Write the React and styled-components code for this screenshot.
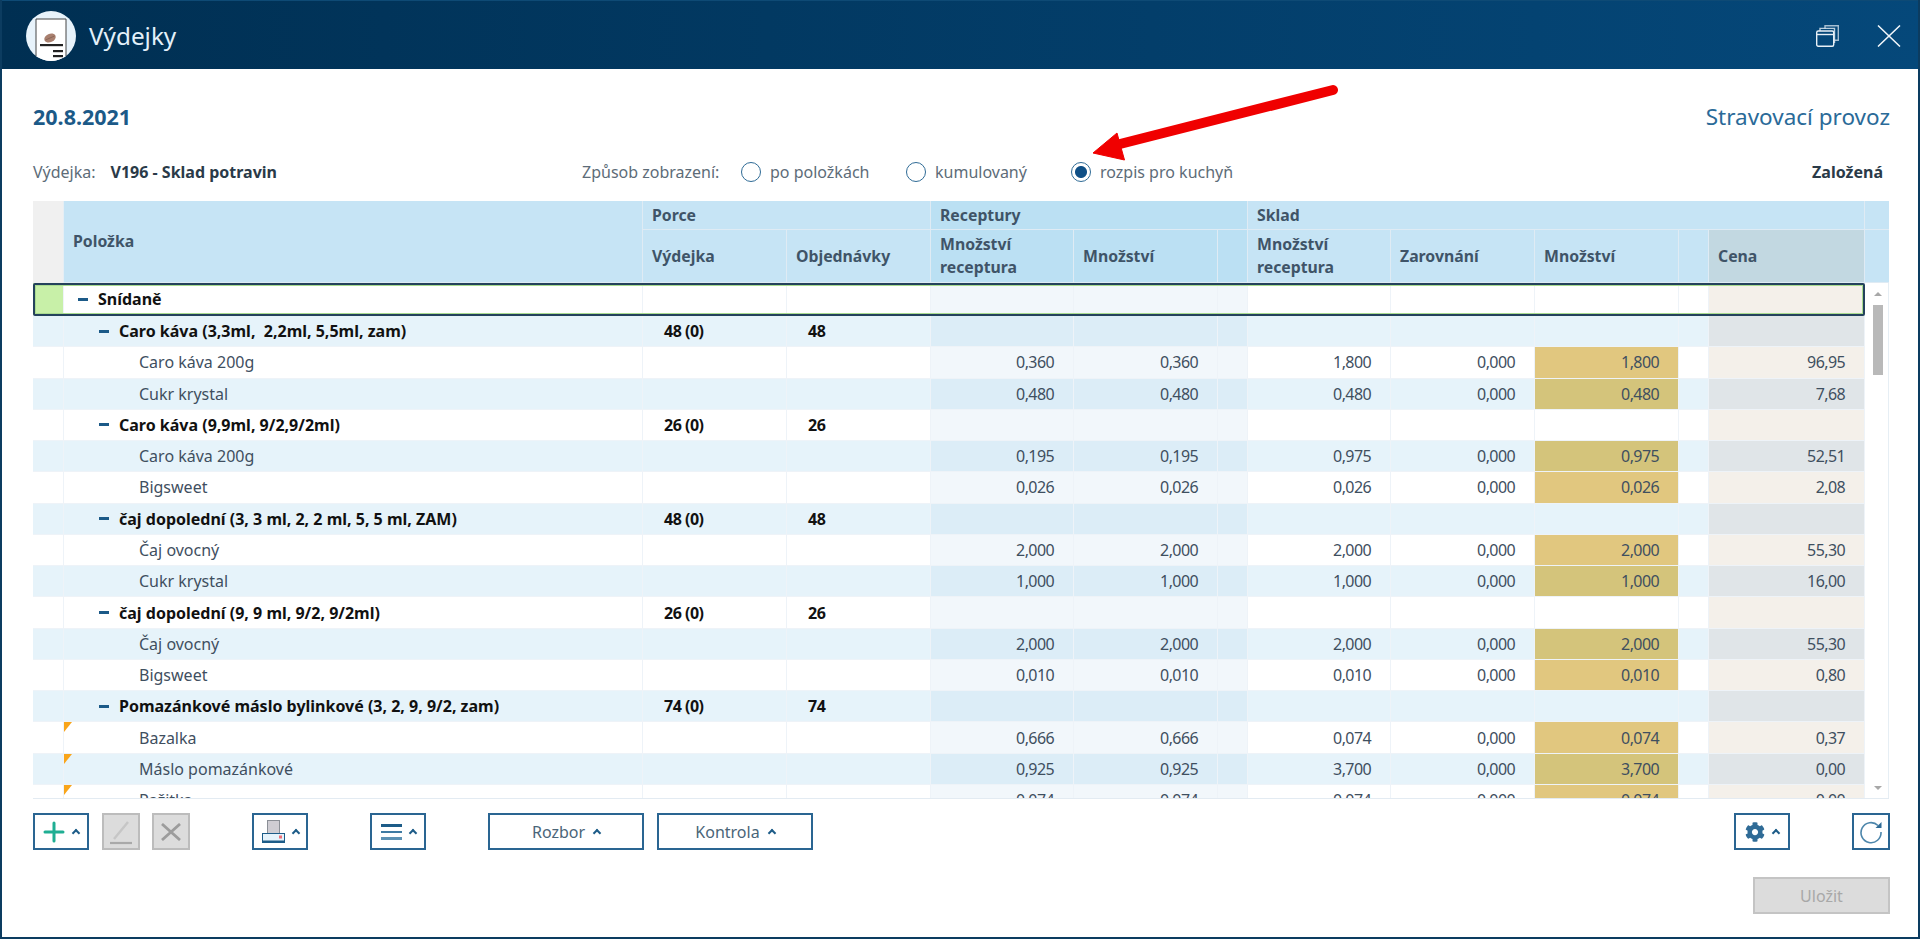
import React from "react";
import styled, { createGlobalStyle } from "styled-components";
import { FaCog } from "react-icons/fa";

const COLS = "31px 579px 144px 144px 143px 144px 30px 143px 144px 144px 30px 156px";
const FONT = `"Noto Sans", "Open Sans", sans-serif`;

const rows = [
  { kind: "meal", name: "Snídaně" },
  { kind: "group", name: "Caro káva (3,3ml,  2,2ml, 5,5ml, zam)", issued: "48 (0)", ordered: "48" },
  { kind: "item", name: "Caro káva 200g", v: ["0,360", "0,360", "1,800", "0,000", "1,800", "96,95"] },
  { kind: "item", name: "Cukr krystal", v: ["0,480", "0,480", "0,480", "0,000", "0,480", "7,68"] },
  { kind: "group", name: "Caro káva (9,9ml, 9/2,9/2ml)", issued: "26 (0)", ordered: "26" },
  { kind: "item", name: "Caro káva 200g", v: ["0,195", "0,195", "0,975", "0,000", "0,975", "52,51"] },
  { kind: "item", name: "Bigsweet", v: ["0,026", "0,026", "0,026", "0,000", "0,026", "2,08"] },
  { kind: "group", name: "čaj dopolední (3, 3 ml, 2, 2 ml, 5, 5 ml, ZAM)", issued: "48 (0)", ordered: "48" },
  { kind: "item", name: "Čaj ovocný", v: ["2,000", "2,000", "2,000", "0,000", "2,000", "55,30"] },
  { kind: "item", name: "Cukr krystal", v: ["1,000", "1,000", "1,000", "0,000", "1,000", "16,00"] },
  { kind: "group", name: "čaj dopolední (9, 9 ml, 9/2, 9/2ml)", issued: "26 (0)", ordered: "26" },
  { kind: "item", name: "Čaj ovocný", v: ["2,000", "2,000", "2,000", "0,000", "2,000", "55,30"] },
  { kind: "item", name: "Bigsweet", v: ["0,010", "0,010", "0,010", "0,000", "0,010", "0,80"] },
  { kind: "group", name: "Pomazánkové máslo bylinkové (3, 2, 9, 9/2, zam)", issued: "74 (0)", ordered: "74" },
  { kind: "item", flag: true, name: "Bazalka", v: ["0,666", "0,666", "0,074", "0,000", "0,074", "0,37"] },
  { kind: "item", flag: true, name: "Máslo pomazánkové", v: ["0,925", "0,925", "3,700", "0,000", "3,700", "0,00"] },
  { kind: "item", flag: true, name: "Pažitka", v: ["0,074", "0,074", "0,074", "0,000", "0,074", "0,00"] },
];

const tones = {
  plain: ["#ffffff", "#e6f3fa"],
  recipe: ["#f2f7fb", "#dcedf7"],
  stock: ["#e1c77f", "#d4c47b"],
  price: ["#f4f0ea", "#e0e5e8"],
};

export default function App() {
  return (
    <>
      <GlobalStyle />
      <Window>
        <TitleBar>
          <Logo viewBox="0 0 50 50">
            <circle cx="25" cy="25" r="25" fill="#e8f3fb" />
            <path d="M10 45V8h30v37q-15 10-30 0z" fill="#fff" />
            <path d="M10 45V8h30v37" fill="none" stroke="#444" strokeWidth="1" />
            <ellipse cx="24" cy="27" rx="6" ry="4.2" transform="rotate(-25 24 27)" fill="#a9806f" />
            <path d="M19.5 29L28.5 25" stroke="#7d5a4c" strokeWidth="0.7" />
            <rect x="14" y="33" width="23" height="2.2" fill="#222" />
            <rect x="27" y="39" width="10" height="2.2" fill="#222" />
            <rect x="27" y="44" width="10" height="2.2" fill="#222" />
          </Logo>
          <Title>Výdejky</Title>
          <WindowIcons>
            <svg width="23" height="22" viewBox="0 0 23 22" fill="none" stroke="#e8f0f6" strokeWidth="1.4">
              <rect x="0.7" y="6" width="17" height="15.3" rx="1.5" />
              <path d="M0.7 9.5h17" />
              <path d="M4 6V3.4h14.5v14h-1" opacity="0.8" />
              <path d="M9 3.4V0.8h13.3v14.4h-3.8" opacity="0.7" />
            </svg>
            <svg width="24" height="22" viewBox="0 0 24 22" stroke="#f2f7fb" strokeWidth="1.5">
              <path d="M1 0.5l22 21M23 0.5L1 21.5" />
            </svg>
          </WindowIcons>
        </TitleBar>

        <Content>
          <TopLine>
            <DateLabel>20.8.2021</DateLabel>
            <Facility>Stravovací provoz</Facility>
          </TopLine>

          <InfoLine>
            <DocInfo>
              <span>Výdejka:</span>
              <strong>V196 - Sklad potravin</strong>
            </DocInfo>
            <Modes>
              <ModeLabel>Způsob zobrazení:</ModeLabel>
              <Radio $width={165}><RadioDot />po položkách</Radio>
              <Radio $width={165}><RadioDot />kumulovaný</Radio>
              <Radio><RadioDot $checked />rozpis pro kuchyň</Radio>
            </Modes>
            <Status>Založená</Status>
          </InfoLine>

          <Arrow width="260" height="80" viewBox="0 0 260 80">
            <path d="M244 6L31 60" stroke="#f00000" strokeWidth="10" strokeLinecap="round" fill="none" />
            <path d="M4 69L28 49L35.5 76Z" fill="#f00000" stroke="#f00000" strokeLinejoin="round" />
          </Arrow>

          <Table>
            <Head>
              <GutterHead />
              <HeadCell $span={1} $rows={2}>Položka</HeadCell>
              <HeadCell $span={2}>Porce</HeadCell>
              <HeadCell $span={3} $dark>Receptury</HeadCell>
              <HeadCell $span={5}>Sklad</HeadCell>
              <HeadCell />
              <HeadCell>Výdejka</HeadCell>
              <HeadCell>Objednávky</HeadCell>
              <HeadCell $dark>Množství<br />receptura</HeadCell>
              <HeadCell $dark>Množství</HeadCell>
              <HeadCell $dark />
              <HeadCell>Množství<br />receptura</HeadCell>
              <HeadCell>Zarovnání</HeadCell>
              <HeadCell>Množství</HeadCell>
              <HeadCell />
              <HeadCell $price>Cena</HeadCell>
              <HeadCell />
            </Head>

            <BodyWrap>
              <Body>
                {rows.map((row, index) => {
                  const alt = index % 2;
                  const v = row.v || [];
                  return (
                    <Row key={index} $selected={row.kind === "meal"}>
                      <Gutter $alt={alt} $selected={row.kind === "meal"} />
                      <NameCell $alt={alt} $kind={row.kind}>
                        {row.flag && <Flag />}
                        {row.kind !== "item" && <Minus />}
                        <NameText>{row.name}</NameText>
                      </NameCell>
                      <Cell $alt={alt} $bold>{row.issued}</Cell>
                      <Cell $alt={alt} $bold>{row.ordered}</Cell>
                      <Cell $alt={alt} $tone="recipe" $num>{v[0]}</Cell>
                      <Cell $alt={alt} $tone="recipe" $num>{v[1]}</Cell>
                      <Cell $alt={alt} $tone="recipe" />
                      <Cell $alt={alt} $num>{v[2]}</Cell>
                      <Cell $alt={alt} $num>{v[3]}</Cell>
                      <Cell $alt={alt} $tone={row.kind === "item" ? "stock" : "plain"} $num>{v[4]}</Cell>
                      <Cell $alt={alt} />
                      <Cell $alt={alt} $tone="price" $num>{v[5]}</Cell>
                    </Row>
                  );
                })}
              </Body>
              <ScrollBar>
                <ScrollArrow $up />
                <ScrollThumb />
                <ScrollArrow />
              </ScrollBar>
            </BodyWrap>
          </Table>

          <Toolbar>
            <IconButton $width={56}>
              <svg width="22" height="22" viewBox="0 0 22 22" stroke="#1fae93" strokeWidth="3" strokeLinecap="round">
                <path d="M11 2v18M2 11h18" />
              </svg>
              <Caret />
            </IconButton>
            <DisabledButton $width={38} $left={13}>
              <svg width="24" height="26" viewBox="0 0 24 26" fill="none">
                <path d="M5 20L19 3" stroke="#c6c6c6" strokeWidth="2.4" />
                <path d="M1 24h22" stroke="#a9a9a9" strokeWidth="2.2" />
              </svg>
            </DisabledButton>
            <DisabledButton $width={38} $left={12}>
              <svg width="20" height="18" viewBox="0 0 20 18" stroke="#9c9c9c" strokeWidth="2.8">
                <path d="M1 1l18 16M19 1L1 17" />
              </svg>
            </DisabledButton>
            <IconButton $width={56} $left={62}>
              <svg width="23" height="23" viewBox="0 0 23 23">
                <rect x="5.5" y="0.5" width="12" height="13" fill="#cfcdd3" stroke="#8b8f96" />
                <rect x="0.5" y="13.5" width="22" height="9" fill="#e6f3fb" stroke="#1d5c88" />
                <rect x="0" y="20.5" width="23" height="2.5" fill="#1d5c88" />
                <rect x="17" y="15.5" width="3" height="3" fill="#ef6f78" />
              </svg>
              <Caret />
            </IconButton>
            <IconButton $width={56} $left={62}>
              <svg width="21" height="16" viewBox="0 0 21 16">
                <rect y="0" width="21" height="3" fill="#1d5c88" />
                <rect y="7" width="21" height="2" fill="#3f7ba3" />
                <rect y="13" width="21" height="3" fill="#5d92b4" />
              </svg>
              <Caret />
            </IconButton>
            <TextButton $width={156} $left={62}>Rozbor <Caret /></TextButton>
            <TextButton $width={156} $left={13}>Kontrola <Caret /></TextButton>
            <ToolbarEnd>
              <IconButton $width={56}>
                <FaCog size={20} color="#2f6b96" />
                <Caret />
              </IconButton>
              <IconButton $width={38} $left={62}>
                <svg width="24" height="24" viewBox="0 0 24 24" fill="none" stroke="#4d86ab" strokeWidth="1.6">
                  <path d="M19 5.5A10 10 0 1 0 22 12" />
                  <path d="M22.5 2v6h-6z" fill="#2f6b96" stroke="none" />
                </svg>
              </IconButton>
            </ToolbarEnd>
          </Toolbar>

          <SaveLine>
            <SaveButton>Uložit</SaveButton>
          </SaveLine>
        </Content>
      </Window>
    </>
  );
}

const GlobalStyle = createGlobalStyle`
  html, body {
    margin: 0;
    padding: 0;
    background: #fff;
  }
  * {
    box-sizing: border-box;
  }
`;

const Window = styled.div`
  width: 1920px;
  height: 939px;
  overflow: hidden;
  display: flex;
  flex-direction: column;
  font-family: ${FONT};
  background: #fff;
  border: 2px solid #0c3c60;
  border-top: none;
`;

const TitleBar = styled.div`
  flex: 0 0 69px;
  margin: 0 -2px;
  display: flex;
  align-items: center;
  padding: 2px 19px 0 26px;
  background: linear-gradient(90deg, #002f52 0%, #05487a 100%);
  border-top: 1px solid #0e4a75;
`;

const Logo = styled.svg`
  width: 50px;
  height: 50px;
  flex: none;
`;

const Title = styled.div`
  margin-left: 13px;
  color: #e3f0fa;
  font-size: 24.3px;
  line-height: 1;
`;

const WindowIcons = styled.div`
  margin-left: auto;
  display: flex;
  align-items: center;
  gap: 38px;
`;

const Content = styled.div`
  position: relative;
  flex: 1;
  padding: 0 28px 0 31px;
  display: flex;
  flex-direction: column;
`;

const TopLine = styled.div`
  display: flex;
  justify-content: space-between;
  align-items: center;
  height: 40px;
  margin-top: 27px;
`;

const DateLabel = styled.div`
  font-size: 21.5px;
  font-weight: 700;
  color: #1c5a88;
`;

const Facility = styled.div`
  font-size: 22.5px;
  color: #2a6a98;
`;

const InfoLine = styled.div`
  display: flex;
  align-items: center;
  height: 30px;
  margin-top: 21px;
  font-size: 16px;
  color: #5d6c78;
`;

const DocInfo = styled.div`
  width: 549px;
  display: flex;
  gap: 15px;
  strong {
    color: #2a3a48;
    font-weight: 700;
  }
`;

const Modes = styled.div`
  display: flex;
  align-items: center;
`;

const ModeLabel = styled.span`
  width: 159px;
`;

const Radio = styled.label`
  width: ${(p) => (p.$width ? `${p.$width}px` : "auto")};
  display: flex;
  align-items: center;
  gap: 9px;
`;

const RadioDot = styled.span`
  width: 20px;
  height: 20px;
  border-radius: 50%;
  border: 1.5px solid #2f6b96;
  background: ${(p) => (p.$checked ? "radial-gradient(circle, #0f4f86 0 5.5px, #fff 6.5px)" : "#fff")};
`;

const Status = styled.div`
  margin-left: auto;
  margin-right: 7px;
  font-weight: 700;
  color: #2a3a48;
`;

const Arrow = styled.svg`
  position: absolute;
  left: 1087px;
  top: 15px;
`;

const Table = styled.div`
  margin-top: 14px;
  width: 1856px;
`;

const Head = styled.div`
  display: grid;
  grid-template-columns: ${COLS} 24px;
  grid-template-rows: 29px 53px;
`;

const GutterHead = styled.div`
  grid-row: span 2;
  background: #f0f0f0;
  border-right: 1px solid #e6eef4;
`;

const HeadCell = styled.div`
  grid-column: span ${(p) => p.$span || 1};
  grid-row: span ${(p) => p.$rows || 1};
  display: flex;
  align-items: center;
  padding-left: 9px;
  font-size: 15.8px;
  line-height: 23px;
  font-weight: 700;
  color: #3f5468;
  background: ${(p) => (p.$price ? "#c2d8e1" : p.$dark ? "#bbe0f3" : "#c6e4f5")};
  border-right: 1px solid #dfebf4;
  border-bottom: 1px solid #dfebf4;
  &:last-child,
  &:nth-child(6) {
    border-right: none;
  }
`;

const BodyWrap = styled.div`
  display: flex;
  height: 516px;
  overflow: hidden;
  border-bottom: 1px solid #e3ebf2;
`;

const Body = styled.div`
  width: 1832px;
  flex: none;
`;

const Row = styled.div`
  position: relative;
  display: grid;
  grid-template-columns: ${COLS};
  height: ${(p) => (p.$selected ? "33px" : "31.28px")};
  ${(p) =>
    p.$selected &&
    `&::after {
      content: "";
      position: absolute;
      inset: 0;
      border: 2px solid #24425c;
      border-radius: 2px;
      box-shadow: inset 0 0 0 1px #a9db8f;
      pointer-events: none;
    }`}
`;

const Cell = styled.div`
  display: flex;
  align-items: center;
  justify-content: ${(p) => (p.$num ? "flex-end" : "flex-start")};
  padding: ${(p) => (p.$num ? "0 19px 0 0" : "0 0 0 21px")};
  font-size: 16px;
  letter-spacing: ${(p) => (p.$bold ? "-0.5px" : "-0.6px")};
  font-weight: ${(p) => (p.$bold ? 700 : 400)};
  color: ${(p) => (p.$bold ? "#111" : "#3f4f5f")};
  background: ${(p) => tones[p.$tone || "plain"][p.$alt]};
  border-right: 1px solid #eef3f8;
  border-bottom: 1px solid #eef3f8;
`;

const Gutter = styled(Cell)`
  padding: 0;
  background: ${(p) => (p.$selected ? "#c8f0a8" : tones.plain[p.$alt])};
`;

const indent = { meal: 14, group: 35, item: 75 };

const NameCell = styled(Cell)`
  position: relative;
  padding-left: ${(p) => indent[p.$kind]}px;
  letter-spacing: 0;
  font-weight: ${(p) => (p.$kind === "item" ? 400 : 700)};
  color: ${(p) => (p.$kind === "item" ? "#3f4f5f" : "#111")};
`;

const NameText = styled.span`
  white-space: pre;
`;

const Minus = styled.span`
  width: 10px;
  height: 3px;
  margin-right: 10px;
  background: #1c5a88;
`;

const Flag = styled.span`
  position: absolute;
  top: 0;
  left: 0;
  border-top: 10px solid #f9a51a;
  border-right: 8px solid transparent;
`;

const ScrollBar = styled.div`
  width: 24px;
  display: flex;
  flex-direction: column;
  align-items: center;
  border-right: 1px solid #e6eef4;
  padding: 9px 0 8px 3px;
`;

const ScrollArrow = styled.span`
  width: 0;
  height: 0;
  border-left: 4px solid transparent;
  border-right: 4px solid transparent;
  ${(p) => (p.$up ? "border-bottom: 4px solid #a8a8a8;" : "border-top: 4px solid #a8a8a8; margin-top: auto;")}
`;

const ScrollThumb = styled.span`
  width: 10px;
  height: 70px;
  margin-top: 9px;
  background: #b9b9b9;
`;

const Toolbar = styled.div`
  display: flex;
  align-items: stretch;
  height: 37px;
  margin-top: 14px;
`;

const ToolbarEnd = styled.div`
  display: flex;
  margin-left: auto;
`;

const IconButton = styled.button`
  width: ${(p) => p.$width}px;
  margin-left: ${(p) => p.$left || 0}px;
  display: flex;
  align-items: center;
  justify-content: center;
  gap: 8px;
  padding: 0;
  background: #fff;
  border: 2px solid #2a6592;
`;

const DisabledButton = styled(IconButton)`
  background: #dcdcdc;
  border-color: #bcbcbc;
`;

const TextButton = styled(IconButton)`
  gap: 9px;
  font-family: ${FONT};
  font-size: 16px;
  color: #4a6578;
`;

const Caret = styled.span`
  width: 6px;
  height: 6px;
  margin-top: 3px;
  border-left: 2px solid #1d5c88;
  border-top: 2px solid #1d5c88;
  transform: rotate(45deg);
`;

const SaveLine = styled.div`
  display: flex;
  justify-content: flex-end;
  margin-top: 27px;
`;

const SaveButton = styled.button`
  width: 137px;
  height: 37px;
  font-family: ${FONT};
  font-size: 16px;
  color: #a8a8a8;
  background: #dcdcdc;
  border: 2px solid #c4c4c4;
`;
